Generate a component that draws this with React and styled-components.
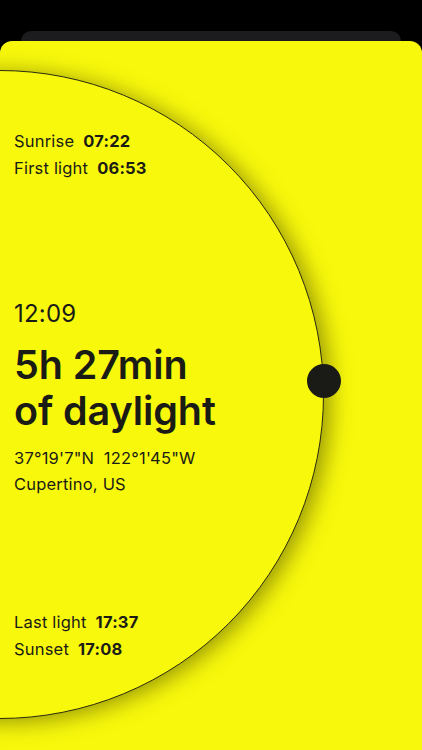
import styled, { createGlobalStyle } from "styled-components";

const GlobalStyle = createGlobalStyle`
  html, body {
    margin: 0;
    padding: 0;
    background: #000;
  }
  body {
    font-family: "Inter", "Liberation Sans", sans-serif;
    -webkit-font-smoothing: antialiased;
  }
`

const Page = styled.div`
  width: 422px;
  height: 750px;
  overflow: hidden;
  background: #000;
  padding-top: 31px;
  box-sizing: border-box;
`

const BackCard = styled.div`
  margin: 0 21px;
  height: 20px;
  border-radius: 10px 10px 0 0;
  background: #1c1c1e;
`

const Sheet = styled.div`
  position: relative;
  margin-top: -10px;
  height: 709px;
  border-radius: 12px 12px 0 0;
  background: #f8f80c;
  overflow: hidden;
  color: #1b1b16;
`

const Disc = styled.div`
  position: absolute;
  left: -325px;
  top: 29px;
  width: 649px;
  height: 649px;
  border-radius: 50%;
  border: 1px solid #2a2a10;
  box-sizing: border-box;
  background: #f8f80c;
  box-shadow: 6px 3px 22px rgba(70, 70, 0, 0.55);
`

const Dot = styled.div`
  position: absolute;
  left: 307px;
  top: 323px;
  width: 34px;
  height: 34px;
  border-radius: 50%;
  background: #1a1a17;
`

const Content = styled.div`
  position: relative;
  display: flex;
  flex-direction: column;
  padding: 87px 14px 0;
`

const Group = styled.div`
  display: flex;
  flex-direction: column;
  margin-top: ${p => p.$gap || 0}px;
`

const Row = styled.div`
  font-size: 16.5px;
  line-height: 27px;
  letter-spacing: 0.2px;
`

const Value = styled.span`
  font-weight: 700;
  margin-left: 9px;
`

const Clock = styled.div`
  font-size: 24px;
  line-height: 30px;
  letter-spacing: 0.2px;
`

const Headline = styled.div`
  font-size: 39.5px;
  font-weight: 600;
  line-height: 46px;
  letter-spacing: -0.1px;
  margin-top: ${p => p.$gap || 0}px;
`

const Meta = styled.div`
  font-size: 16.5px;
  line-height: 26px;
  letter-spacing: 0.2px;
  margin-top: ${p => p.$gap || 0}px;
`

export default function App() {
  return (
    <>
      <GlobalStyle />
      <Page>
        <BackCard />
        <Sheet>
          <Disc />
          <Dot />
          <Content>
            <Group>
              <Row>Sunrise<Value>07:22</Value></Row>
              <Row>First light<Value>06:53</Value></Row>
            </Group>
            <Group $gap={117}>
              <Clock>12:09</Clock>
              <Headline $gap={13}>5h 27min</Headline>
              <Headline>of daylight</Headline>
              <Meta $gap={11}>37°19'7"N&nbsp;&nbsp;122°1'45"W</Meta>
              <Meta>Cupertino, US</Meta>
            </Group>
            <Group $gap={112}>
              <Row>Last light<Value>17:37</Value></Row>
              <Row>Sunset<Value>17:08</Value></Row>
            </Group>
          </Content>
        </Sheet>
      </Page>
    </>
  )
}
